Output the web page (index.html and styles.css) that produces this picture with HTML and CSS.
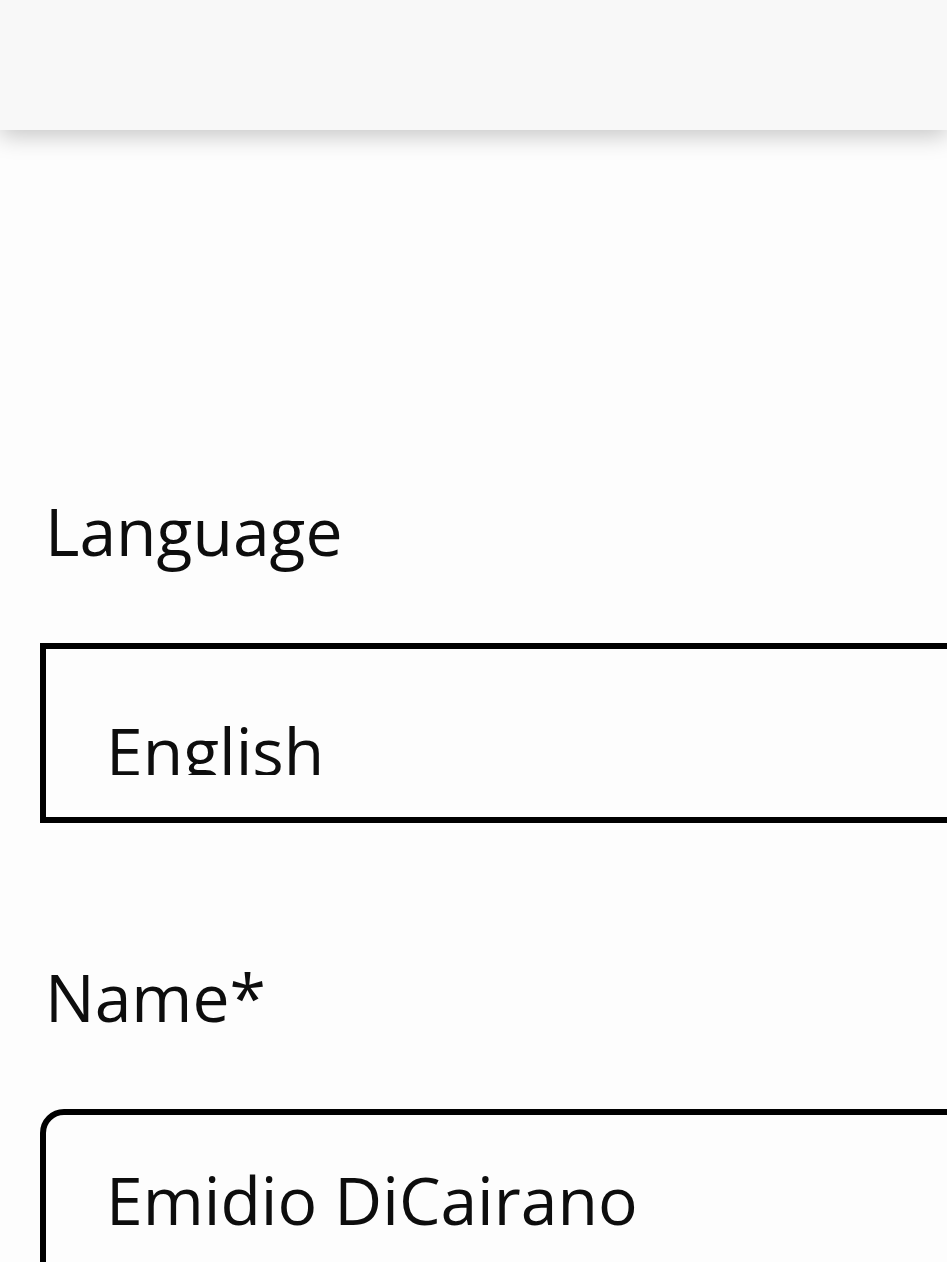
FILE: index.html
```html
<!DOCTYPE html>
<html lang="en">
<head>
<meta charset="utf-8">
<title>Profile</title>
<link rel="stylesheet" href="styles.css">
</head>
<body>
<header class="topbar"></header>
<main class="form">
  <div class="field">
    <label class="label">Language</label>
    <div class="select">
      <div class="select-clip"><span class="value">English</span></div>
    </div>
  </div>
  <div class="field field-name">
    <label class="label">Name*</label>
    <div class="input"><span class="value">Emidio DiCairano</span></div>
  </div>
</main>
</body>
</html>
```
FILE: styles.css
```css
html, body {
  margin: 0;
  padding: 0;
  width: 947px;
  height: 1262px;
  overflow: hidden;
  background: #fdfdfd;
}
body {
  font-family: "Open Sans", "Lato", sans-serif;
  color: #0d0d0d;
  position: relative;
}
.topbar {
  height: 130px;
  background: #f8f8f8;
  box-shadow: 0 6px 22px rgba(0, 0, 0, 0.22);
  position: relative;
  z-index: 1;
}
.form {
  padding: 360px 0 0 40px;
  width: 1000px;
  display: flex;
  flex-direction: column;
}
.field {
  display: flex;
  flex-direction: column;
}
.field-name {
  margin-top: 133px;
}
.label {
  display: block;
  font-size: 66px;
  line-height: 80px;
  padding-left: 5px;
  margin-bottom: 73px;
}
.select {
  border: 6px solid #000;
  height: 168px;
  padding-left: 60px;
}
.select-clip {
  height: 126px;
  overflow: hidden;
  padding-top: 61px;
  box-sizing: border-box;
}
.value {
  display: block;
  font-size: 66px;
  line-height: 80px;
  white-space: nowrap;
}
.input {
  border: 6px solid #000;
  border-radius: 24px;
  height: 300px;
  padding: 44px 0 0 60px;
}
```
